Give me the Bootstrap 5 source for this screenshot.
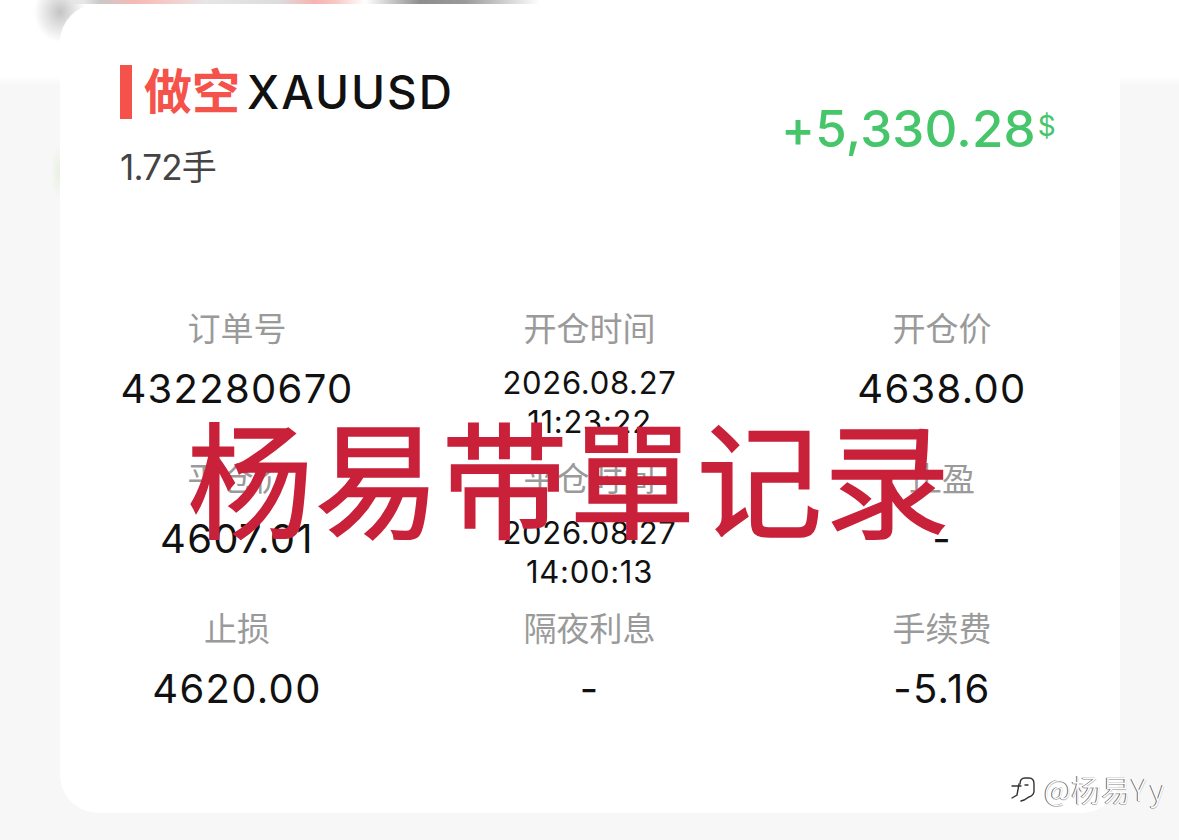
<!DOCTYPE html>
<html lang="zh">
<head>
<meta charset="utf-8">
<title>XAUUSD</title>
<link href="https://cdn.jsdelivr.net/npm/bootstrap@5.3.0/dist/css/bootstrap.min.css" rel="stylesheet">
<style>
html,body{height:840px;overflow:hidden}
body{position:relative;font-family:"Inter","Noto Sans CJK SC","Liberation Sans",sans-serif;
 background:
  radial-gradient(ellipse 26px 30px at 60px 12px,#c4c4c4 0,#e2e2e2 50%,rgba(255,255,255,0) 100%) no-repeat,
  radial-gradient(ellipse 8px 26px at 59px 172px,#e9f0e0 0,rgba(247,247,247,0) 100%) no-repeat,
  linear-gradient(#fff 0,#fff 76px,#f7f7f7 86px) no-repeat #f7f7f7}
.blur-strip{height:4px;background:linear-gradient(90deg,rgba(255,255,255,0) 70px,#c9c9c9 100px,#f6b9b4 135px,#f7c3bf 155px,#e6e6e6 205px,#dcdcdc 280px,#f6b4ae 315px,#f6c7c3 335px,#fff 365px,#8e8e8e 420px,#9a9a9a 465px,#fff 540px)}
.trade-sheet{width:1060px;height:809px;margin-left:60px;background:#fff;border-radius:38px;padding:61px 61px 0 60px}
.side-bar{width:12px;height:54px;background:#f4524a}
.side-word{font-size:48px;font-weight:700;color:#f4524a;line-height:54px;margin-left:12px}
.symbol{font-size:46px;font-weight:500;color:#111;line-height:54px;margin-left:7px;letter-spacing:2px}
.lots{font-size:35px;color:#444;line-height:40px;margin-top:28px;letter-spacing:-.8px}
.pnl{font-size:51px;font-weight:500;color:#46c56b;margin-top:31px;line-height:60px;margin-right:3px;letter-spacing:.2px}
.pnl-unit{font-size:28px;vertical-align:11px;margin-left:2px;font-weight:400}
.stat-grid{margin-top:122px}
.stat-line{height:150px}
.stat-cell{width:234px;text-align:center}
.stat-label{font-size:33px;color:#9a9a9a;line-height:40px;height:40px}
.stat-value{font-size:40px;color:#111;line-height:44px;margin-top:18px;letter-spacing:1.3px;font-weight:400}
.stat-date{font-size:31px;color:#111;line-height:38.5px;margin-top:15px;letter-spacing:.7px}
.stamp{position:absolute;left:187px;top:389px;font-family:"Noto Sans CJK SC",sans-serif;font-size:126px;font-weight:400;-webkit-text-stroke:1.5px #c9213a;line-height:170px;color:#c9213a;letter-spacing:1.4px;white-space:nowrap}
.credit{position:absolute;left:1011px;top:769px;display:flex;align-items:center;gap:9px;font-family:"Noto Sans CJK SC",sans-serif;font-size:30px;font-weight:300;line-height:38px;color:#fff;text-shadow:-1px 0 0 #666,0 1px 0 #bbb;white-space:nowrap}
.credit svg{width:24px;height:32px}
.credit-latin{letter-spacing:4px}
</style>
</head>
<body>
<div class="blur-strip"></div>
<main class="trade-sheet">
  <div class="d-flex justify-content-between align-items-start">
    <div>
      <div class="d-flex align-items-center">
        <span class="side-bar"></span>
        <span class="side-word">做空</span>
        <span class="symbol">XAUUSD</span>
      </div>
      <div class="lots">1.72手</div>
    </div>
    <div class="pnl">+5,330.28<span class="pnl-unit">$</span></div>
  </div>
  <div class="stat-grid">
    <div class="stat-line d-flex justify-content-between">
      <div class="stat-cell"><div class="stat-label">订单号</div><div class="stat-value">432280670</div></div>
      <div class="stat-cell"><div class="stat-label">开仓时间</div><div class="stat-date">2026.08.27<br>11:23:22</div></div>
      <div class="stat-cell"><div class="stat-label">开仓价</div><div class="stat-value">4638.00</div></div>
    </div>
    <div class="stat-line d-flex justify-content-between">
      <div class="stat-cell"><div class="stat-label">平仓价</div><div class="stat-value">4607.01</div></div>
      <div class="stat-cell"><div class="stat-label">平仓时间</div><div class="stat-date">2026.08.27<br>14:00:13</div></div>
      <div class="stat-cell"><div class="stat-label">止盈</div><div class="stat-value">-</div></div>
    </div>
    <div class="stat-line d-flex justify-content-between">
      <div class="stat-cell"><div class="stat-label">止损</div><div class="stat-value">4620.00</div></div>
      <div class="stat-cell"><div class="stat-label">隔夜利息</div><div class="stat-value">-</div></div>
      <div class="stat-cell"><div class="stat-label">手续费</div><div class="stat-value">-5.16</div></div>
    </div>
  </div>
</main>
<div class="stamp">杨易带單记录</div>
<div class="credit">
  <svg viewBox="0 0 24 32" fill="none" stroke="#333" stroke-width="1.4" stroke-linecap="round">
    <path d="M9 12c0-4 2-6 5-6h4c3 0 5 2 5 6v7c0 3-2 5-5 6l-5 3-3 1"/>
    <path d="M1 14h9M8 12l-2 11-5 3"/>
    <path d="M14 13h3"/>
  </svg>
  <span>@杨易<span class="credit-latin">Yy</span></span>
</div>
<script src="https://cdn.jsdelivr.net/npm/bootstrap@5.3.0/dist/js/bootstrap.bundle.min.js"></script>
</body>
</html>
